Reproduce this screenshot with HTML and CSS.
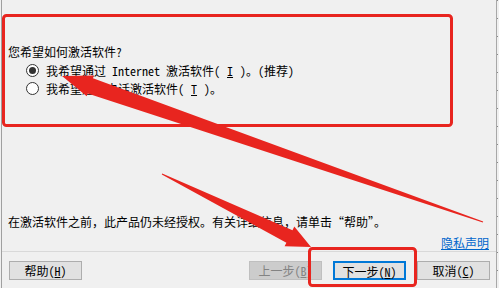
FILE: index.html
```html
<!DOCTYPE html>
<html lang="zh-CN">
<head>
    <meta charset="UTF-8">
    <meta name="viewport" content="width=device-width, initial-scale=1.0">
    <title>激活向导</title>
    <link rel="stylesheet" href="styles.css">
</head>
<body>
    <div class="window">
        <div class="choice">
            <p class="question">您希望如何激活软件?</p>
            <label class="option"><span class="radio checked"></span>我希望通过 Internet 激活软件(<u>I</u>)。(推荐)</label>
            <label class="option"><span class="radio"></span>我希望通过电话激活软件(<u>T</u>)。</label>
        </div>

        <div class="spacer"></div>

        <p class="notice">在激活软件之前，此产品仍未经授权。有关详细信息，请单击“帮助”。</p>
        <div class="privacy"><a href="#">隐私声明</a></div>
        <hr class="separator">

        <div class="buttons">
            <button class="btn">帮助(<u>H</u>)</button>
            <div class="nav">
                <button class="btn" disabled>上一步(<u>B</u>)</button>
                <button class="btn default">下一步(<u>N</u>)</button>
                <button class="btn">取消(<u>C</u>)</button>
            </div>
        </div>
    </div>

    <!-- red marks drawn over the dialog -->
    <svg class="marks" width="499" height="288" viewBox="0 0 499 288">
        <g fill="none" stroke="#e8251f" stroke-width="3">
            <rect x="3.5" y="15.5" width="448" height="110" rx="3"/>
            <rect x="309.5" y="248.5" width="106" height="37" rx="3"/>
        </g>
        <g fill="#e8251f">
            <polygon points="62,76 93.9,75.4 93,78.3 483.2,221.6 482.8,222.4 87.7,93.4 86.7,96.2"/>
            <polygon points="311,247 284.6,246.3 286.4,242.7 161.8,174.4 162.2,173.6 292.5,230.2 294.3,226.6"/>
        </g>
    </svg>
</body>
</html>
```

FILE: styles.css
```css
* {
    box-sizing: border-box;
}

body {
    margin: 0;
    background-color: #f0f0f0;
    background-image: repeating-linear-gradient(to bottom, transparent 0 17px, #8a8a8a 17px 18px);
    background-size: 1px 18px;
    background-position: 497px 1px;
    background-repeat: repeat-y;
    font-family: "Noto Sans Mono CJK SC", "Noto Sans CJK SC", monospace;
    font-size: 12px;
    color: #000;
}

.window {
    margin-left: 1px;
    width: 496px;
    height: 288px;
    border-left: 1px solid #a0a0a0;
    border-right: 1px solid #a8a8a8;
    display: flex;
    flex-direction: column;
}

.choice {
    padding: 43px 0 0 6px;
}

.question {
    margin: 0;
    line-height: 18px;
}

.option {
    display: flex;
    align-items: center;
    gap: 7px;
    height: 18px;
    padding-left: 18px;
}

.radio {
    width: 13px;
    height: 13px;
    border: 1px solid #333;
    border-radius: 50%;
    background: #fff;
    display: flex;
    align-items: center;
    justify-content: center;
}

.radio.checked::after {
    content: "";
    width: 7px;
    height: 7px;
    border-radius: 50%;
    background: #333;
}

.spacer {
    flex: 1;
}

.notice {
    margin: 0 0 4px;
    padding-left: 6px;
    line-height: 18px;
}

.privacy {
    text-align: right;
    padding-right: 7px;
    line-height: 16px;
}

.privacy a {
    color: #0066cc;
}

.separator {
    margin: 0;
    border: none;
    border-top: 1px solid #d9d9d9;
    height: 0;
}

.buttons {
    display: flex;
    justify-content: space-between;
    padding: 9px 6px 8px 7px;
}

.nav {
    display: flex;
    gap: 11px;
}

.btn {
    width: 73px;
    height: 19px;
    padding: 0;
    font: inherit;
    line-height: 17px;
    color: #000;
    background: #e1e1e1;
    border: 1px solid #adadad;
}

.btn:disabled {
    background: #cccccc;
    border-color: #bfbfbf;
    color: #838383;
}

.btn.default {
    border: 2px solid #0078d7;
}

.marks {
    position: absolute;
    left: 0;
    top: 0;
    pointer-events: none;
}
```
